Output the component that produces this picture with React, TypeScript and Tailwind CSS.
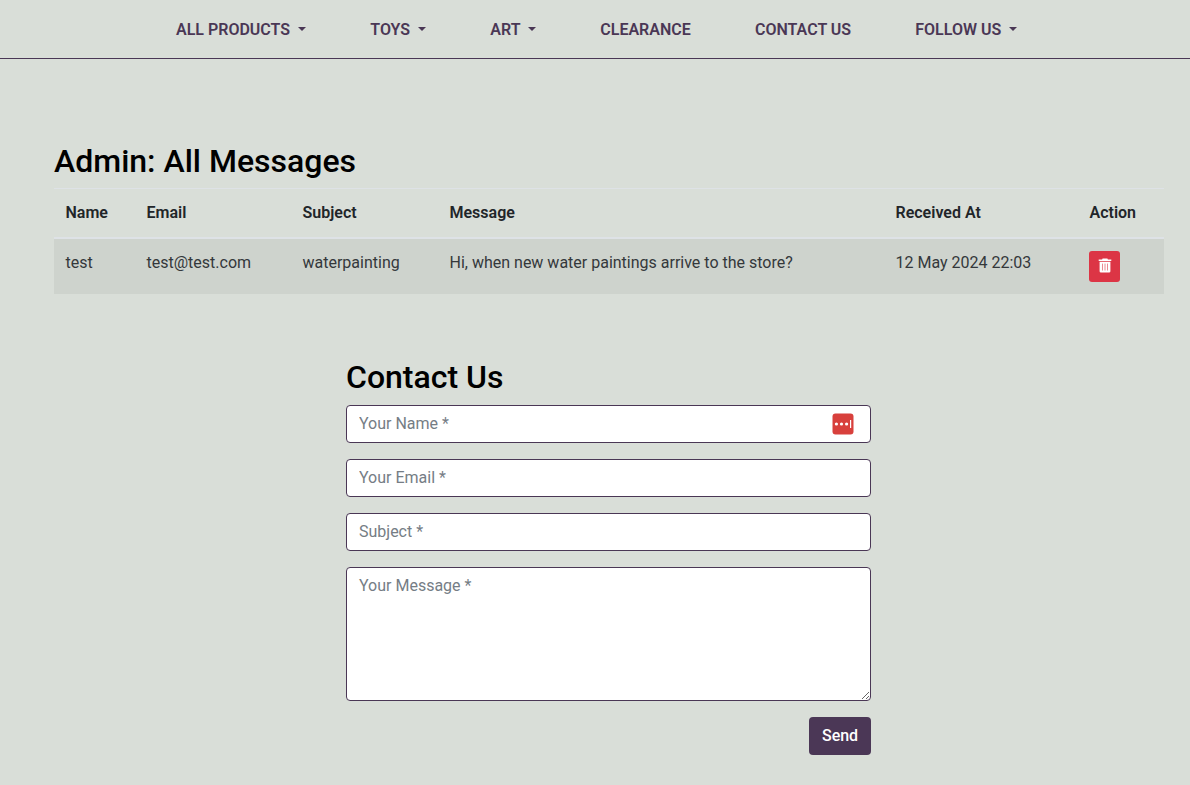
import React from "react";

const nav = [
  { label: "ALL PRODUCTS", x: "w-[194.3px]", menu: true },
  { label: "TOYS", x: "w-[120px]", menu: true },
  { label: "ART", x: "w-[110px]", menu: true },
  { label: "CLEARANCE", x: "w-[154.7px]", menu: false },
  { label: "CONTACT US", x: "w-[160.3px]", menu: false },
  { label: "FOLLOW US", x: "w-[110px]", menu: true },
];

const columns = [
  { title: "Name", value: "test" },
  { title: "Email", value: "test@test.com" },
  { title: "Subject", value: "waterpainting" },
  { title: "Message", value: "Hi, when new water paintings arrive to the store?" },
  { title: "Received At", value: "12 May 2024 22:03" },
];

const grid = "grid grid-cols-[81px_156px_147px_446px_194px_86px]";
const field =
  "block w-full rounded-[4px] border border-[#4a3755] bg-white px-3 text-base leading-6 text-[#495057] placeholder:text-[#757d85] placeholder:opacity-100 outline-none";
const input = `${field} h-[38px] pb-[7px] pt-[5px]`;

function Trash() {
  return (
    <svg width="14" height="15" viewBox="0 0 14 15" fill="#fff">
      <path d="M4.6 0.5h4.8l.5 1h3.4v1.6H.7V1.5h3.4z" />
      <path d="M1.6 3.7h10.8v9.5a1.3 1.3 0 0 1-1.3 1.3H2.9a1.3 1.3 0 0 1-1.3-1.3z" />
      <path d="M4.5 5.6v6.9M7 5.6v6.9M9.5 5.6v6.9" stroke="#e98a93" strokeWidth="1" />
    </svg>
  );
}

export default function App() {
  return (
    <div className="h-[785px] overflow-hidden bg-[#d9ded8] font-['Roboto',sans-serif] text-base leading-6 text-[#212529]">
      <nav className="flex h-[59px] items-center border-b border-[#4a3755] pl-44 pt-px font-semibold text-[#4a3755]">
        {nav.map((n) => (
          <a key={n.label} className={`flex shrink-0 items-center whitespace-nowrap ${n.x}`}>
            {n.label}
            {n.menu && (
              <span className="mb-px ml-2 inline-block border-x-[4.8px] border-t-[4.8px] border-x-transparent border-t-[#4a3755]" />
            )}
          </a>
        ))}
      </nav>

      <section className="pl-[54px] pt-[83px]">
        <h2 className="mb-2 text-[32px] font-medium leading-[38px] text-black">Admin: All Messages</h2>
        <div className="w-[1110px]">
          <div className={`${grid} h-[51px] border-b-2 border-t border-b-[#dee2e6] border-t-[#dee2e6] font-semibold`}>
            {columns.map((c) => (
              <div key={c.title} className="pl-[11.5px] pt-3">{c.title}</div>
            ))}
            <div className="pl-[11.5px] pt-3">Action</div>
          </div>
          <div className={`${grid} h-[55px] bg-[#ced3cd] text-[#34383b]`}>
            {columns.map((c) => (
              <div key={c.title} className="whitespace-nowrap pl-[11.5px] pt-3">{c.value}</div>
            ))}
            <div className="pl-[11px] pt-3">
              <button className="flex h-[31px] w-[31px] items-start justify-center rounded-[3px] bg-[#dc3545] pt-[7px] text-white">
                <Trash />
              </button>
            </div>
          </div>
        </div>
      </section>

      <form className="ml-[346px] mt-16 flex w-[525px] flex-col">
        <h2 className="mb-[9px] text-[32px] font-medium leading-[38px] text-black">Contact Us</h2>
        <div className="relative mb-4">
          <input className={input} placeholder="Your Name *" />
          <svg className="absolute right-[17px] top-2" width="22" height="22" viewBox="0 0 22 22">
            <rect x="0.5" y="0.5" width="21" height="21" rx="3" fill="#d8403c" />
            <circle cx="4.4" cy="11" r="1.6" fill="#fff" />
            <circle cx="9.5" cy="11" r="1.6" fill="#fff" />
            <circle cx="14.6" cy="11" r="1.6" fill="#fff" />
            <rect x="18" y="7" width="1.2" height="8" fill="#fff" />
          </svg>
        </div>
        <input className={`${input} mb-4`} placeholder="Your Email *" />
        <input className={`${input} mb-4`} placeholder="Subject *" />
        <textarea className={`${field} mb-4 h-[134px] resize-y py-1.5`} placeholder="Your Message *" />
        <button type="button" className="h-[38px] w-[62px] self-end rounded-[4px] bg-[#4b3756] font-medium tracking-[-0.1px] text-white">
          Send
        </button>
      </form>
    </div>
  );
}
